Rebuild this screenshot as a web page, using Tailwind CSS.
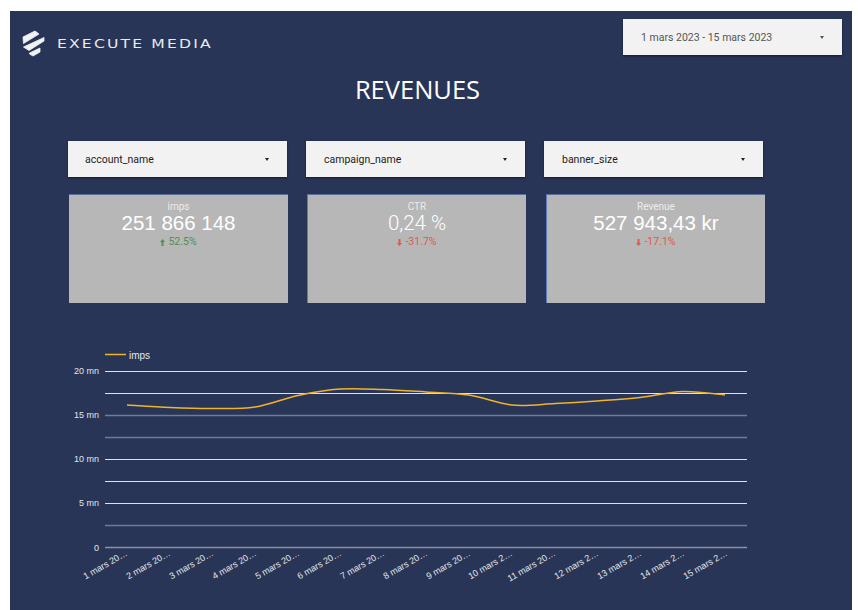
<!DOCTYPE html>
<html lang="en">
<head>
    <meta charset="UTF-8">
    <title>Revenues</title>
    <script src="https://cdn.jsdelivr.net/npm/@tailwindcss/browser@4"></script>
</head>
<body class="bg-white overflow-hidden">
    <div class="ml-[10px] mt-[11px] w-[842px] h-[599px] bg-[#283556] overflow-hidden font-['Roboto',sans-serif]">
        <!-- Header -->
        <div class="flex justify-between items-start h-[44px] pt-[8px]">
            <div class="flex items-center gap-[12px] ml-[12px] mt-[11px]">
                <svg width="23" height="27" viewBox="0 0 23 27" fill="#f1f2f4" stroke="#f1f2f4" stroke-width="0.800" stroke-linejoin="round">
                    <path d="M13 1 L17 4 L1.500 13.500 L1 7 Z"/>
                    <path d="M22 7.500 L22 11 L7 20.500 L1.500 17 Z"/>
                    <path d="M18 18 L18 22 L11 26 L7.500 24 L7.500 23 Z"/>
                </svg>
                <span class="origin-left scale-x-[1.2] font-['DejaVu_Sans',sans-serif] text-[13px] leading-none tracking-[1.8px] text-[#e9ebef]">EXECUTE MEDIA</span>
            </div>
            <div class="w-[219px] h-[36px] mr-[10px] pl-[18px] pr-[18px] pt-[1px] flex items-center justify-between bg-[#f2f2f2] text-[10.5px] text-[#555] shadow-[0_1px_2px_rgba(0,0,0,0.5)]">
                <span>1 mars 2023 - 15 mars 2023</span>
                <span class="w-0 h-0 border-x-[2.5px] border-x-transparent border-t-[3px] border-t-[#555]"></span>
            </div>
        </div>

        <h1 class="mt-[17px] pr-[27px] text-center text-[25.500px] leading-[34px] text-white font-['Open_Sans',sans-serif]">REVENUES</h1>

        <!-- Filters -->
        <div class="mt-[35px] ml-[58px] flex gap-[19px]">
            <div class="w-[219px] h-[36px] pl-[17px] pr-[18px] pt-[1px] flex items-center justify-between bg-[#f2f2f2] text-[10.5px] text-[#222] shadow-[0_1px_2px_rgba(0,0,0,0.5)]">
                <span>account_name</span>
                <span class="w-0 h-0 border-x-[2.5px] border-x-transparent border-t-[3px] border-t-[#222]"></span>
            </div>
            <div class="w-[219px] h-[36px] pl-[18px] pr-[18px] pt-[1px] flex items-center justify-between bg-[#f2f2f2] text-[10.5px] text-[#222] shadow-[0_1px_2px_rgba(0,0,0,0.5)]">
                <span>campaign_name</span>
                <span class="w-0 h-0 border-x-[2.5px] border-x-transparent border-t-[3px] border-t-[#222]"></span>
            </div>
            <div class="w-[219px] h-[36px] pl-[18px] pr-[18px] pt-[1px] flex items-center justify-between bg-[#f2f2f2] text-[10.5px] text-[#222] shadow-[0_1px_2px_rgba(0,0,0,0.5)]">
                <span>banner_size</span>
                <span class="w-0 h-0 border-x-[2.5px] border-x-transparent border-t-[3px] border-t-[#222]"></span>
            </div>
        </div>

        <!-- Scorecards -->
        <div class="mt-[17px] ml-[59px] flex gap-[19px]">
            <div class="w-[219px] h-[109px] pt-[6px] bg-[#b7b7b7] border-t border-t-[#5c6f9c] flex flex-col items-center">
                <div class="text-[10px] leading-[12px] text-[#ececec]">imps</div>
                <div class="-mt-[2px] font-['Liberation_Sans',sans-serif] text-[20.500px] leading-[24px] text-white">251 866 148</div>
                <div class="mt-[1px] flex items-center gap-[3px] text-[10.5px] leading-[12px] text-[#4f9150]">
                    <svg width="5" height="7" viewBox="0 0 5 7" fill="currentColor"><path d="M2.500 0 L5 3 L3.500 3 L3.500 7 L1.500 7 L1.500 3 L0 3 Z"/></svg>
                    <span>52.5%</span>
                </div>
            </div>
            <div class="w-[219px] h-[109px] pt-[6px] bg-[#b7b7b7] border-t border-t-[#5c6f9c] border-l border-l-[#5c7ab8] flex flex-col items-center">
                <div class="text-[10px] leading-[12px] text-[#ececec]">CTR</div>
                <div class="-mt-[2px] text-[20.500px] font-light leading-[24px] text-white">0,24 %</div>
                <div class="mt-[1px] flex items-center gap-[3px] text-[10.5px] leading-[12px] text-[#e0574c]">
                    <svg width="5" height="7" viewBox="0 0 5 7" fill="currentColor"><path d="M2.500 7 L5 4 L3.500 4 L3.500 0 L1.500 0 L1.500 4 L0 4 Z"/></svg>
                    <span>-31.7%</span>
                </div>
            </div>
            <div class="ml-[1px] w-[219px] h-[109px] pt-[6px] bg-[#b7b7b7] border-t border-t-[#5c6f9c] border-l border-l-[#5c7ab8] flex flex-col items-center">
                <div class="text-[10px] leading-[12px] text-[#ececec]">Revenue</div>
                <div class="-mt-[2px] font-['Liberation_Sans',sans-serif] text-[20.500px] leading-[24px] text-white">527 943,43 kr</div>
                <div class="mt-[1px] flex items-center gap-[3px] text-[10.5px] leading-[12px] text-[#e0574c]">
                    <svg width="5" height="7" viewBox="0 0 5 7" fill="currentColor"><path d="M2.500 7 L5 4 L3.500 4 L3.500 0 L1.500 0 L1.500 4 L0 4 Z"/></svg>
                    <span>-17.1%</span>
                </div>
            </div>
        </div>

        <!-- Line chart, svg coords are panel x and y -->
        <svg class="mt-[48px] block" width="842" height="259" viewBox="0 340 842 259" font-family="'Liberation Sans', sans-serif" font-size="9" fill="#e3e5ea">
            <line x1="95" x2="116" y1="343.500" y2="343.500" stroke="#f0b429" stroke-width="1.500"/>
            <text x="119" y="347.500" font-size="10">imps</text>

            <g stroke-width="1">
                <line x1="95" x2="737" y1="360.500" y2="360.500" stroke="#dfe1e6"/>
                <line x1="95" x2="737" y1="382.500" y2="382.500" stroke="#dfe1e6"/>
                <line x1="95" x2="737" y1="404.500" y2="404.500" stroke="#727b92" stroke-width="1.500"/>
                <line x1="95" x2="737" y1="426.500" y2="426.500" stroke="#727b92" stroke-width="1.500"/>
                <line x1="95" x2="737" y1="448.500" y2="448.500" stroke="#dfe1e6"/>
                <line x1="95" x2="737" y1="470.500" y2="470.500" stroke="#dfe1e6"/>
                <line x1="95" x2="737" y1="492.500" y2="492.500" stroke="#dfe1e6"/>
                <line x1="95" x2="737" y1="514.500" y2="514.500" stroke="#727b92" stroke-width="1.500"/>
                <line x1="95" x2="737" y1="536.500" y2="536.500" stroke="#8a92a6" stroke-width="1.500"/>
            </g>

            <g text-anchor="end">
                <text x="89" y="363">20 mn</text>
                <text x="89" y="407">15 mn</text>
                <text x="89" y="451">10 mn</text>
                <text x="89" y="495">5 mn</text>
                <text x="89" y="540">0</text>
            </g>

            <path id="curve" fill="none" stroke="#f0b429" stroke-width="1.500"/>

            <g text-anchor="end" font-size="9">
                <text transform="translate(118 544) rotate(-30)">1 mars 20…</text>
                <text transform="translate(161 544) rotate(-30)">2 mars 20…</text>
                <text transform="translate(204 544) rotate(-30)">3 mars 20…</text>
                <text transform="translate(247 544) rotate(-30)">4 mars 20…</text>
                <text transform="translate(290 544) rotate(-30)">5 mars 20…</text>
                <text transform="translate(332 544) rotate(-30)">6 mars 20…</text>
                <text transform="translate(375 544) rotate(-30)">7 mars 20…</text>
                <text transform="translate(418 544) rotate(-30)">8 mars 20…</text>
                <text transform="translate(461 544) rotate(-30)">9 mars 20…</text>
                <text transform="translate(503 544) rotate(-30)">10 mars 2…</text>
                <text transform="translate(546 544) rotate(-30)">11 mars 20…</text>
                <text transform="translate(589 544) rotate(-30)">12 mars 2…</text>
                <text transform="translate(632 544) rotate(-30)">13 mars 2…</text>
                <text transform="translate(675 544) rotate(-30)">14 mars 2…</text>
                <text transform="translate(718 544) rotate(-30)">15 mars 2…</text>
            </g>
        </svg>
    </div>

    <script>
        // smooth line through the daily values
        const pts = [[117,394],[160,396.500],[202,397.500],[245,396],[288,384.500],[330,378],[373,378.500],[416,381],[459,384],[502,394],[545,392.500],[587,390],[630,386.500],[673,380.500],[715,384]];
        let d = `M${pts[0][0]} ${pts[0][1]}`;
        for (let i = 0; i < pts.length - 1; i++) {
            const p0 = pts[i - 1] || pts[i], p1 = pts[i], p2 = pts[i + 1], p3 = pts[i + 2] || p2;
            const c1x = p1[0] + (p2[0] - p0[0]) / 6, c1y = p1[1] + (p2[1] - p0[1]) / 6;
            const c2x = p2[0] - (p3[0] - p1[0]) / 6, c2y = p2[1] - (p3[1] - p1[1]) / 6;
            d += ` C${c1x} ${c1y} ${c2x} ${c2y} ${p2[0]} ${p2[1]}`;
        }
        document.getElementById('curve').setAttribute('d', d);
    </script>
</body>
</html>
